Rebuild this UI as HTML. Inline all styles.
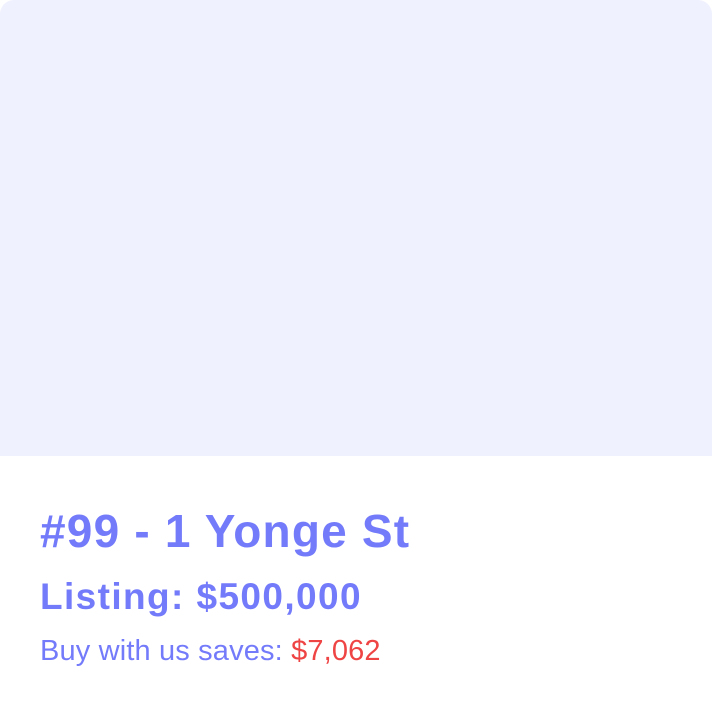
<!DOCTYPE html>
<html><head><style>
html,body{margin:0;padding:0;background:#fff;}
body{width:712px;height:708px;overflow:hidden;font-family:"Liberation Sans",sans-serif;position:relative;}
.img{position:absolute;left:0;top:0;width:712px;height:456px;background:#eff1fe;border-radius:14px 14px 0 0;}
.t{position:absolute;left:40px;white-space:nowrap;color:#747bfa;}
.h{top:501px;font-size:46px;font-weight:bold;line-height:60px;letter-spacing:1.2px;}
.l{top:574px;font-size:37px;font-weight:bold;line-height:46px;letter-spacing:1.4px;}
.s{top:631px;font-size:29px;line-height:40px;letter-spacing:0.15px;}
.s span{color:#ef4444;}
</style></head><body>
<div class="img"></div>
<div class="t h">#99 - 1 Yonge St</div>
<div class="t l">Listing: $500,000</div>
<div class="t s">Buy with us saves: <span>$7,062</span></div>
</body></html>
